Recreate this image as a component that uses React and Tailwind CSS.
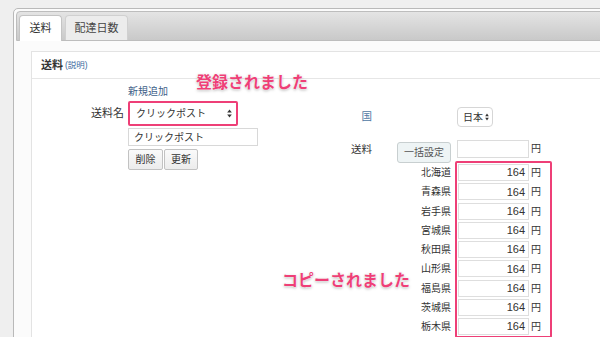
import React from 'react';

const prefs = ['北海道', '青森県', '岩手県', '宮城県', '秋田県', '山形県', '福島県', '茨城県', '栃木県'];

function Arrows() {
  return (
    <svg width="5" height="9" viewBox="0 0 5 9" className="shrink-0">
      <path d="M2.5 0.5 L4.8 3.6 L0.2 3.6 Z" fill="#333" />
      <path d="M2.5 8.5 L4.8 5.4 L0.2 5.4 Z" fill="#333" />
    </svg>
  );
}

export default function App() {
  const note = 'absolute text-[16px] leading-[20px] font-bold text-[#ee3f77] whitespace-nowrap [text-shadow:0_0_2px_#fff,0_0_1px_#fff,0_1px_3px_rgba(0,0,0,0.35)]';

  return (
    <div className="w-[600px] h-[337px] overflow-hidden bg-[#efefef] pt-[8px] pl-[13px] text-[#333] font-['Liberation_Sans','Noto_Sans_CJK_JP',sans-serif]">
      <div className="w-[700px] h-[400px] border border-[#b9b9b9] rounded-tl-[5px] bg-[#fbfbfb] p-[2px]">
        {/* tab bar */}
        <div className="h-[30px] rounded-tl-[4px] border border-[#bdbdbd] bg-gradient-to-b from-[#e4e4e4] to-[#c9c9c9] flex items-end gap-[3px] pl-[2px]">
          <div className="h-[26px] -mb-[1px] w-[43px] bg-white rounded-t-[4px] border border-b-0 border-[#c4c4c4] flex items-center justify-center text-[11px]">
            送料
          </div>
          <div className="h-[25px] w-[63px] bg-[#ececec] rounded-t-[4px] border border-b-0 border-[#d0d0d0] flex items-center justify-center text-[11px] text-[#444]">
            配達日数
          </div>
        </div>

        {/* body */}
        <div className="ml-[15px] mt-[10px] relative border border-[#e3e3e3] bg-white h-[340px]">
          <div className="h-[27px] border-b border-[#e6e6e6] flex items-center pl-[9px] gap-[2px]">
            <span className="text-[11px] font-bold">送料</span>
            <span className="text-[8.5px] text-[#3b6aa0]">(説明)</span>
          </div>

          <div className="flex items-start">
            {/* left form */}
            <div className="flex flex-col pt-[7px]">
              <div className="flex">
                <div className="w-[92px]" />
                <div className="ml-[4px] text-[10px] leading-[12px] text-[#3d6088]">新規追加</div>
              </div>
              <div className="flex items-center mt-[3px]">
                <div className="w-[92px] text-right text-[11px]">送料名</div>
                <div className="ml-[4px] w-[110px] h-[25px] border-2 border-[#ee3f77] rounded-[2px] bg-white flex items-center justify-between pl-[6px] pr-[4px]">
                  <span className="text-[10px]">クリックポスト</span>
                  <Arrows />
                </div>
              </div>
              <div className="flex mt-[2px]">
                <div className="w-[92px]" />
                <div className="ml-[4px] w-[130px] h-[18px] border border-[#d8d8d8] flex items-center pl-[5px] text-[10px]">
                  クリックポスト
                </div>
              </div>
              <div className="flex mt-[3px]">
                <div className="w-[92px]" />
                <div className="ml-[4px] flex gap-[1px]">
                  <button className="w-[35px] h-[21px] border border-[#c2c2c2] rounded-[2px] bg-gradient-to-b from-[#fafafa] to-[#ececec] text-[10px]">削除</button>
                  <button className="w-[34px] h-[21px] border border-[#c2c2c2] rounded-[2px] bg-gradient-to-b from-[#fafafa] to-[#ececec] text-[10px]">更新</button>
                </div>
              </div>
            </div>

            {/* right form */}
            <div className="ml-[74px] pt-[28px] flex flex-col">
              <div className="flex items-center h-[20px]">
                <div className="w-[40px] text-right text-[10.5px] text-[#4d77a3]">国</div>
                <div className="ml-[85px] w-[36px] h-[20px] border border-[#d6d6d6] rounded-[4px] bg-white flex items-center gap-[2px] pl-[5px]">
                  <span className="text-[10px]">日本</span>
                  <svg width="4" height="8" viewBox="0 0 4 8">
                    <path d="M2 0.5 L3.8 3.2 L0.2 3.2 Z" fill="#333" />
                    <path d="M2 7.5 L3.8 4.8 L0.2 4.8 Z" fill="#333" />
                  </svg>
                </div>
              </div>

              <div className="flex mt-[13px]">
                <div className="w-[40px] text-right text-[10.5px] leading-[14px] pt-[2px]">送料</div>
                <div className="flex flex-col">
                  <div className="flex items-start h-[21px]">
                    <button className="ml-[25px] mt-[2px] w-[54px] h-[21px] border border-[#c8cfd0] rounded-[3px] bg-[#eef4f5] text-[10px] text-[#555]">
                      一括設定
                    </button>
                    <div className="ml-[6px] w-[72px] h-[18px] border border-[#dcdcdc] bg-white" />
                    <span className="ml-[2px] text-[10px] leading-[18px]">円</span>
                  </div>
                  <div className="flex">
                    <div className="w-[83px] pt-[2px] pr-[4px] flex flex-col">
                      {prefs.map((p) => (
                        <div key={p} className="h-[19.25px] flex items-center justify-end text-[10px]">{p}</div>
                      ))}
                    </div>
                    <div className="w-[97px] border-2 border-[#ee3f77] rounded-[2px] flex flex-col">
                      {prefs.map((p) => (
                        <div key={p} className="h-[19.25px] flex items-center pl-[1px]">
                          <div className="w-[71px] h-[17px] border border-[#dedede] bg-white flex items-center justify-end pr-[3px] text-[11px]">164</div>
                          <span className="ml-[2px] text-[10px]">円</span>
                        </div>
                      ))}
                    </div>
                  </div>
                </div>
              </div>
            </div>
          </div>

          <div className={`${note} left-[164px] top-[21px]`}>登録されました</div>
          <div className={`${note} left-[250px] top-[219px]`}>コピーされました</div>
        </div>
      </div>
    </div>
  );
}
